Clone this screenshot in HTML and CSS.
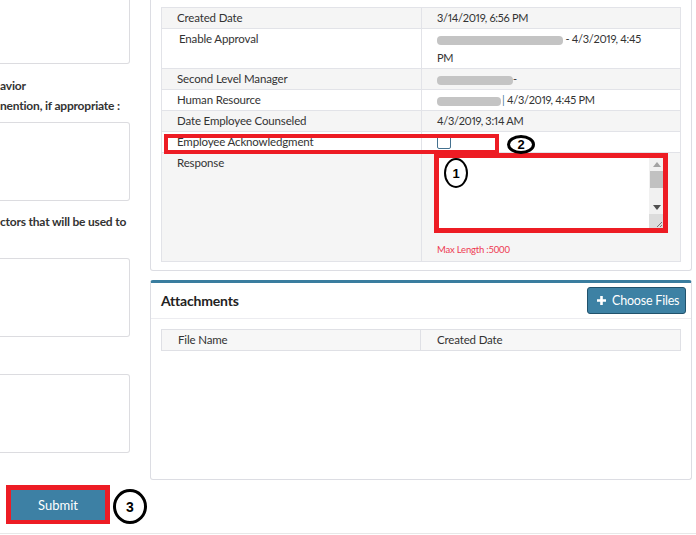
FILE: index.html
```html
<!DOCTYPE html>
<html>
<head>
<meta charset="utf-8">
<link rel="stylesheet" href="styles.css">
</head>
<body>
<div class="page">
  <div class="cols">
    <div class="left">
      <div class="box box-first"></div>
      <div class="lbl-group first">
        <p class="lbl">avior</p>
        <p class="lbl">nention, if appropriate :</p>
      </div>
      <div class="box"></div>
      <div class="lbl-group">
        <p class="lbl">ctors that will be used to</p>
        <p class="lbl"></p>
      </div>
      <div class="box"></div>
      <div class="lbl-group">
        <p class="lbl"></p>
      </div>
      <div class="box"></div>
      <div class="submit-row">
        <div class="frame-submit"><button class="btn-submit">Submit</button></div>
        <span class="ann ann-3">3</span>
      </div>
    </div>
    <div class="right">
      <div class="panel1">
        <table class="info">
          <tr><td class="c1">Created Date</td><td class="v">3/14/2019, 6:56 PM</td></tr>
          <tr class="multi"><td class="c1 indent">Enable Approval</td><td class="v"><span class="blur b1"></span> - 4/3/2019, 4:45<br>PM</td></tr>
          <tr><td class="c1">Second Level Manager</td><td class="v"><span class="blur b2"></span>-</td></tr>
          <tr><td class="c1">Human Resource</td><td class="v"><span class="blur b3"></span><span class="pipe">|</span> 4/3/2019, 4:45 PM</td></tr>
          <tr><td class="c1">Date Employee Counseled</td><td class="v">4/3/2019, 3:14 AM</td></tr>
          <tr><td class="c1">Employee Acknowledgment</td><td class="v"><span class="chk"></span></td></tr>
          <tr class="resp"><td class="c1">Response</td><td class="resp-val">
            <div class="ta">
              <div class="sb">
                <div class="sb-btn"><svg width="8" height="5" viewBox="0 0 8 5"><path d="M0 5L4 0L8 5Z" fill="#a3a3a3"/></svg></div>
                <div class="sb-thumb"></div>
                <div class="sb-track"></div>
                <div class="sb-btn"><svg width="8" height="5" viewBox="0 0 8 5"><path d="M0 0L8 0L4 5Z" fill="#505050"/></svg></div>
                <div class="sb-corner"><svg width="15" height="15" viewBox="0 0 15 15"><path d="M13 8L8 13M13 11L11 13" stroke="#777" stroke-width="1"/></svg></div>
              </div>
              <span class="frame-ta"></span>
            </div>
            <div class="maxlen">Max Length :5000</div>
          </td></tr>
        </table>
      </div>
      <div class="panel2">
        <div class="p2-head">
          <h3 class="p2-title">Attachments</h3>
          <button class="btn-choose"><svg width="9" height="9" viewBox="0 0 9 9"><path d="M3.2 0H5.8V3.2H9V5.8H5.8V9H3.2V5.8H0V3.2H3.2Z" fill="#fff"/></svg><span>Choose Files</span></button>
        </div>
        <div class="p2-body">
          <table class="files">
            <tr><th class="f1">File Name</th><th>Created Date</th></tr>
          </table>
        </div>
      </div>
    </div>
  </div>
  <span class="ann-frame-ack"></span>
  <span class="ann ann-2">2</span>
  <span class="ann ann-1">1</span>
</div>
</body>
</html>
```
FILE: styles.css
```css
* { box-sizing: border-box; }
html, body { margin: 0; padding: 0; background: #fff; }
body { font-family: Lato, "Liberation Sans", sans-serif; font-size: 11.5px; letter-spacing: -0.15px; color: #333; }

.page { position: relative; width: 696px; height: 534px; overflow: hidden; border-bottom: 1px solid #e8e8e8; }
.cols { display: flex; gap: 20px; align-items: flex-start; }

.left { width: 130px; flex: none; }
.box { height: 79px; border: 1px solid #dcdce0; border-left: none; border-radius: 0 3px 3px 0; background: #fff; }
.box-first { margin-top: -20px; height: 84px; }
.lbl-group { margin: 11px 0 6px; }
.lbl-group.first { margin-top: 12px; }
.lbl { margin: 0; height: 20px; line-height: 20px; font-size: 12px; font-weight: bold; letter-spacing: -0.2px; white-space: nowrap; color: #333; }

.submit-row { display: flex; align-items: flex-start; margin-top: 32px; padding-left: 6px; }
.frame-submit { flex: none; border: 5px solid #ed1c24; border-bottom-width: 4px; }
.btn-submit { display: block; width: 94px; height: 30px; border: none; background: #3d80a4; color: #fff; font-family: Lato, sans-serif; font-size: 13px; padding: 0; }

.ann { display: flex; align-items: center; justify-content: center; border: 3px solid #000; border-radius: 50%; background: transparent; font-family: "Liberation Sans", sans-serif; font-weight: bold; color: #000; letter-spacing: 0; }
.ann-3 { flex: none; width: 34px; height: 35px; margin: 4px 0 0 3px; font-size: 14px; }
.ann-2 { position: absolute; left: 507px; top: 135px; width: 28px; height: 19px; font-size: 13px; }
.ann-1 { position: absolute; left: 444px; top: 158px; width: 24px; height: 30px; border-width: 2.5px; font-size: 13px; }
.ann-frame-ack { position: absolute; left: 164px; top: 134px; width: 335px; height: 20px; border: 4px solid #ed1c24; }

.right { width: 542px; flex: none; }
.panel1 { border: 1px solid #dcdde3; border-top: none; border-radius: 0 0 3px 3px; padding: 7px 10px 8px; }
.info { width: 100%; border-collapse: collapse; border: 1px solid #e2e3e8; }
.info td { border: 1px solid #e2e3e8; padding: 0 15px; line-height: 20px; vertical-align: top; white-space: nowrap; }
.info tr:nth-child(odd) td { background: #f5f5f5; }
.info .c1 { width: 261px; }
.info .indent { padding-left: 17px; }
.info .multi td { line-height: 19px; padding-bottom: 1px; }
.info .v { font-size: 11px; letter-spacing: -0.3px; font-variant-numeric: proportional-nums; }
.blur { display: inline-block; height: 9px; background: #c4c4c4; border-radius: 4px; filter: blur(0.7px); vertical-align: middle; }
.b1 { width: 126px; }
.b2 { width: 76px; }
.b3 { width: 64px; }
.pipe { color: #4d7fa0; margin-left: 1px; }
.chk { display: inline-block; width: 14px; height: 13px; border: 1px solid #44718f; border-radius: 2px; background: #fff; vertical-align: middle; margin-top: -2px; }

.info .resp-val { padding: 3px 15px 4px 15px; }
.ta { position: relative; width: 228px; height: 74px; border: 1px solid #c8c8c8; background: #fff; display: flex; justify-content: flex-end; }
.sb { width: 15px; display: flex; flex-direction: column; background: #f1f1f1; }
.sb-btn { height: 14px; display: flex; align-items: center; justify-content: center; }
.sb-thumb { height: 17px; margin: 0 1px; background: #c1c1c1; }
.sb-track { flex: 1; }
.sb-corner { height: 15px; background: #dcdcdc; display: flex; }
.frame-ta { position: absolute; left: -4px; top: -4px; right: -4px; bottom: -4px; border: 5px solid #ed1c24; }
.maxlen { margin-top: 13px; font-size: 9.5px; letter-spacing: -0.2px; line-height: 14px; color: #ee3a52; }

.panel2 { margin-top: 9px; border: 1px solid #dcdde3; border-top: 3px solid #3a7d9f; border-radius: 3px; }
.p2-head { height: 36px; border-bottom: 1px solid #ececf0; display: flex; align-items: center; justify-content: space-between; padding: 0 5px 0 10px; }
.p2-title { margin: 0; font-size: 14px; font-weight: bold; letter-spacing: -0.2px; color: #222; }
.btn-choose { flex: none; height: 27px; width: 99px; display: flex; align-items: center; gap: 6px; padding: 0 0 0 9px; white-space: nowrap; background: #3d81a4; border: 1px solid #21526c; border-radius: 3px; color: #fff; font-family: Lato, sans-serif; font-size: 12.5px; letter-spacing: -0.2px; }
.p2-body { height: 160px; padding: 10px; }
.files { width: 100%; border-collapse: collapse; border: 1px solid #dfe0e5; }
.files th { background: #f7f7f7; border: 1px solid #dfe0e5; font-weight: normal; text-align: left; padding: 0 16px; line-height: 20px; }
.files .f1 { width: 259px; }
```
